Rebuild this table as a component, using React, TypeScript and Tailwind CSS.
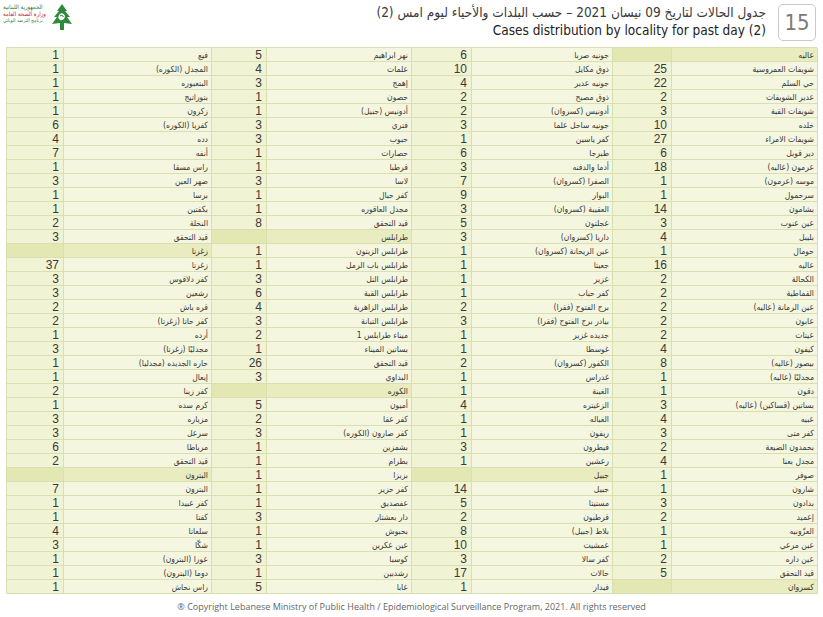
import React from "react";

type G = [string, string, boolean?];
// each row: [groupA (rightmost), groupB, groupC, groupD (leftmost)]
const A: G[] = [
  ["عاليه", "", true],
  ["شويفات العمروسية", "25"],
  ["حي السلم", "22"],
  ["عدير الشويفات", "2"],
  ["شويفات القبة", "3"],
  ["خلده", "10"],
  ["شويفات الامراء", "27"],
  ["دير قوبل", "6"],
  ["عرمون (عاليه)", "18"],
  ["موسه (عرمون)", "1"],
  ["سرحمول", "1"],
  ["بشامون", "14"],
  ["عين عنوب", "3"],
  ["بليبل", "4"],
  ["حومال", "1"],
  ["عاليه", "16"],
  ["الكحالة", "2"],
  ["القماطية", "2"],
  ["عين الرمانة (عاليه)", "2"],
  ["عابون", "2"],
  ["عيتات", "2"],
  ["كيفون", "4"],
  ["بيصور (عاليه)", "8"],
  ["مجدليًا (عاليه)", "1"],
  ["دقون", "1"],
  ["بساتين (قساكين) (عاليه)", "3"],
  ["عبيه", "4"],
  ["كفر متى", "3"],
  ["بحمدون الضيعة", "2"],
  ["مجدل بعنا", "4"],
  ["صوفر", "1"],
  ["شارون", "1"],
  ["بدادون", "3"],
  ["إعميد", "2"],
  ["العزّونيه", "1"],
  ["عين مرعي", "1"],
  ["عين داره", "2"],
  ["قيد التحقق", "5"],
  ["كسروان", "", true],
];
const B: G[] = [
  ["جونيه صربا", "6"],
  ["ذوق مكايل", "10"],
  ["جونيه عدير", "4"],
  ["ذوق مصبح", "2"],
  ["أدونيس (كسروان)", "2"],
  ["جونيه ساحل علما", "3"],
  ["كفر ياسين", "1"],
  ["طبرجا", "6"],
  ["أدما والدفنه", "3"],
  ["الصفرا (كسروان)", "7"],
  ["البوار", "9"],
  ["العقيبة (كسروان)", "3"],
  ["عجلتون", "5"],
  ["داريا (كسروان)", "3"],
  ["عين الريحانة (كسروان)", "1"],
  ["جعيتا", "1"],
  ["عزير", "1"],
  ["كفر حباب", "1"],
  ["برج الفتوح (فقرا)", "2"],
  ["بيادر برج الفتوح (فقرا)", "3"],
  ["جديده غزير", "1"],
  ["غوسطا", "1"],
  ["الكفور (كسروان)", "2"],
  ["غدراس", "1"],
  ["الغينة", "1"],
  ["الزعيتره", "4"],
  ["الغباله", "1"],
  ["ريفون", "1"],
  ["فيطرون", "3"],
  ["رعشين", "1"],
  ["جبيل", "", true],
  ["جبيل", "14"],
  ["مستيتا", "5"],
  ["قرطبون", "2"],
  ["بلاط (جبيل)", "8"],
  ["عمشيت", "10"],
  ["كفر سالا", "3"],
  ["حالات", "17"],
  ["فيدار", "1"],
];
const C: G[] = [
  ["نهر ابراهيم", "5"],
  ["علمات", "4"],
  ["إهمج", "3"],
  ["حصون", "1"],
  ["أدونيس (جبيل)", "1"],
  ["فتري", "3"],
  ["حبوب", "3"],
  ["حصارات", "1"],
  ["قرطبا", "1"],
  ["لاسا", "3"],
  ["كفر حبال", "1"],
  ["مجدل العاقوره", "1"],
  ["قيد التحقق", "8"],
  ["طرابلس", "", true],
  ["طرابلس الزيتون", "1"],
  ["طرابلس باب الرمل", "1"],
  ["طرابلس التل", "3"],
  ["طرابلس القبة", "6"],
  ["طرابلس الزاهرية", "4"],
  ["طرابلس التبانة", "3"],
  ["ميناء طرابلس 1", "2"],
  ["بساتين الميناء", "1"],
  ["قيد التحقق", "26"],
  ["البداوي", "3"],
  ["الكوره", "", true],
  ["أميون", "5"],
  ["كفر عقا", "2"],
  ["كفر صارون (الكوره)", "3"],
  ["بشمزين", "1"],
  ["بطرام", "1"],
  ["بزيزا", "1"],
  ["كفر حزير", "1"],
  ["عفصديق", "1"],
  ["دار بعشتار", "3"],
  ["بحبوش", "1"],
  ["عين عكرين", "1"],
  ["كوسبا", "3"],
  ["رشدبين", "1"],
  ["عابا", "5"],
];
const D: G[] = [
  ["فيع", "1"],
  ["المجدل (الكوره)", "1"],
  ["البتعبوره", "1"],
  ["بتوراتيج", "1"],
  ["زكرون", "1"],
  ["كفريا (الكوره)", "6"],
  ["دده", "4"],
  ["أنفه", "7"],
  ["راس مسقا", "1"],
  ["ضهر العين", "3"],
  ["برسا", "1"],
  ["بكفتين", "1"],
  ["النخلة", "2"],
  ["قيد التحقق", "3"],
  ["زغرتا", "", true],
  ["زغرتا", "37"],
  ["كفر دلاقوس", "3"],
  ["رشعين", "3"],
  ["قره باش", "2"],
  ["كفر حاتا (زغرتا)", "2"],
  ["أرده", "1"],
  ["مجدليًا (زغرتا)", "3"],
  ["حاره الجديده (مجدليا)", "1"],
  ["إيعال", "1"],
  ["كفر زينا", "2"],
  ["كرم سده", "1"],
  ["مزياره", "3"],
  ["سرعل", "3"],
  ["مرياطا", "6"],
  ["قيد التحقق", "2"],
  ["البترون", "", true],
  ["البترون", "7"],
  ["كفر عبيدا", "1"],
  ["كفتا", "1"],
  ["سلعاتا", "4"],
  ["شكّا", "3"],
  ["عورا (البترون)", "1"],
  ["دوما (البترون)", "1"],
  ["راس نحاش", "1"],
];

const arabic = { fontFamily: '"DejaVu Sans Condensed", "DejaVu Sans", sans-serif' };
const sans = { fontFamily: '"Liberation Sans", Arial, sans-serif' };

function NumCell({ g }: { g: G }) {
  return (
    <div
      className={
        "h-[14px] border-r border-b border-[#d9dfb0] pr-[4px] text-right text-[12px] leading-[14px] text-[#3a3a3a] " +
        (g[2] ? "bg-[#e3e8b3]" : "bg-[#f0f3d4]")
      }
      style={sans}
    >
      {g[1]}
    </div>
  );
}
function NameCell({ g }: { g: G }) {
  return (
    <div
      dir="rtl"
      className={
        "h-[14px] overflow-hidden whitespace-nowrap border-r border-b border-[#d9dfb0] pr-[3px] text-right text-[8.5px] leading-[14px] text-[#3a3a3a] " +
        (g[2] ? "bg-[#e8ecbf]" : "bg-[#f4f6df]")
      }
      style={arabic}
    >
      {g[0]}
    </div>
  );
}

function Logo() {
  return (
    <div className="flex items-start gap-[3px] pl-[3px] pt-[3px]">
      <div dir="rtl" className="flex w-[44px] flex-col items-end whitespace-nowrap text-[6px] leading-[7px]" style={arabic}>
        <span className="text-[#2f7d3a]">الجمهورية اللبنانية</span>
        <span className="text-[#c0282d]">وزارة الصحة العامة</span>
        <span className="text-[5px] text-[#2f7d3a]">برنامج الترصد الوبائي</span>
      </div>
      <svg width="24" height="28" viewBox="0 0 24 28">
        <path d="M12 1 L7 8 L9 8 L4 14 L7 14 L2 21 L10 20 L10 27 L14 27 L14 20 L22 21 L17 14 L20 14 L15 8 L17 8 Z" fill="#2f8a3c" />
        <path d="M9 12 C11 9 14 10 15 13 C15 16 12 18 10 17 C8 16 8 14 9 12 Z" fill="#ffffff" />
        <path d="M10 13 C11 12 13 12 13.5 14" stroke="#2f8a3c" strokeWidth="1" fill="none" />
      </svg>
    </div>
  );
}

export default function App() {
  const rows = A.map((_, i) => i);
  return (
    <div className="relative h-[617px] w-[823px] overflow-hidden bg-white">
      <div className="flex h-[47px] items-start justify-between">
        <Logo />
        <div className="flex items-start gap-[12px] pr-[7px] pt-[4px]">
          <div className="flex flex-col items-end">
            <div dir="rtl" className="text-[13.5px] leading-[17px] text-[#3a3a3a]" style={arabic}>
              جدول الحالات لتاريخ 09 نيسان 2021 &ndash; حسب البلدات والأحياء ليوم امس (2)
            </div>
            <div className="text-[13.5px] leading-[18px] text-[#222]" style={arabic}>
              Cases distribution by locality for past day (2)
            </div>
          </div>
          <div className="flex h-[37px] w-[38px] items-center justify-center rounded-[5px] border border-[#c9c9c9] text-[22px] font-light text-[#7a7a7a]" style={arabic}>
            15
          </div>
        </div>
      </div>
      <div className="mx-[6px] grid w-[811px] grid-cols-[57px_148px_55px_145px_60px_141px_59px_146px] border-l border-t border-[#d9dfb0]">
        {rows.map((i) => (
          <React.Fragment key={i}>
            <NumCell g={D[i]} />
            <NameCell g={D[i]} />
            <NumCell g={C[i]} />
            <NameCell g={C[i]} />
            <NumCell g={B[i]} />
            <NameCell g={B[i]} />
            <NumCell g={A[i]} />
            <NameCell g={A[i]} />
          </React.Fragment>
        ))}
      </div>
      <div className="mt-[6px] text-center text-[9px] text-[#666]" style={{ fontFamily: '"Open Sans", sans-serif' }}>
        ® Copyright Lebanese Ministry of Public Health / Epidemiological Surveillance Program, 2021. All rights reserved
      </div>
    </div>
  );
}
